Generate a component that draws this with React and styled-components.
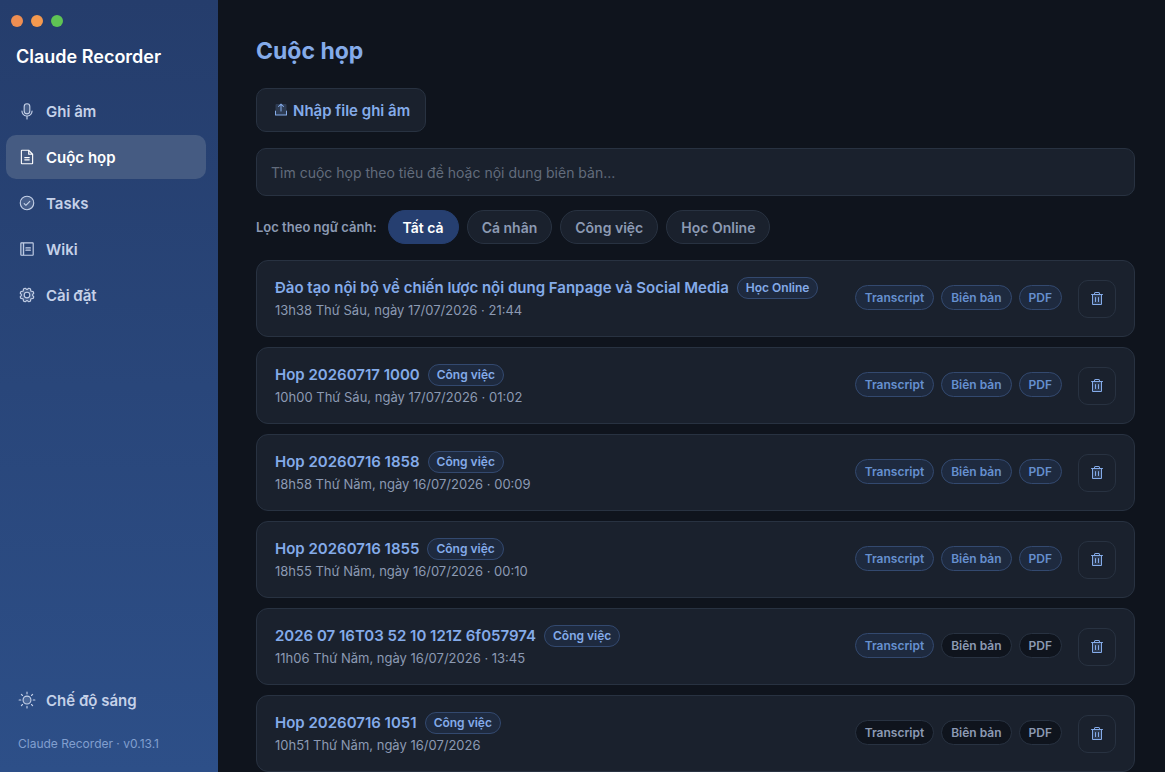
import React, { useState } from "react";
import styled, { createGlobalStyle } from "styled-components";
import {
  PiMicrophoneDuotone,
  PiFileTextDuotone,
  PiCheckCircleDuotone,
  PiNotebookDuotone,
  PiGearDuotone,
  PiSunDuotone,
  PiUploadSimpleDuotone,
  PiTrashDuotone,
} from "react-icons/pi";

const color = {
  page: "#0f141d",
  surface: "#1a212d",
  line: "#283241",
  primary: "#84abe9",
  link: "#6690cf",
  muted: "#8c9ab3",
  hint: "#626c7c",
};

const GlobalStyle = createGlobalStyle`
  * {
    box-sizing: border-box;
  }

  body {
    margin: 0;
    background: ${color.page};
    font-family: Inter, "Noto Sans", sans-serif;
    -webkit-font-smoothing: antialiased;
  }

  button,
  input {
    font-family: inherit;
  }
`;

const Layout = styled.div`
  display: flex;
  height: 100vh;
  overflow: hidden;
`;

const Sidebar = styled.aside`
  flex: none;
  width: 218px;
  display: flex;
  flex-direction: column;
  padding: 15px 12px 20px 6px;
  background: linear-gradient(180deg, #253d6c 0%, #2d4f88 100%);
`;

const WindowDots = styled.div`
  display: flex;
  gap: 8px;
  padding-left: 5px;
`;

const Dot = styled.span`
  width: 12px;
  height: 12px;
  border-radius: 50%;
  background: ${props => props.$tone};
`;

const Brand = styled.div`
  padding: 18px 10px 20px;
  font-size: 18px;
  line-height: 24px;
  font-weight: 600;
  color: #fff;
`;

const Nav = styled.nav`
  display: flex;
  flex-direction: column;
  gap: 2px;
  flex: 1;
`;

const NavLink = styled.a`
  display: flex;
  align-items: center;
  gap: 10px;
  height: 44px;
  padding: 0 12px;
  border-radius: 10px;
  font-size: 15px;
  font-weight: 600;
  text-decoration: none;
  color: ${props => (props.$active ? "#fff" : "#c5d1e8")};
  background: ${props => (props.$active ? "#455b82" : "transparent")};
`;

const ThemeButton = styled.button`
  display: flex;
  align-items: center;
  gap: 10px;
  height: 44px;
  padding: 0 12px;
  border: 0;
  background: none;
  font-size: 15px;
  font-weight: 600;
  color: #c5d1e8;
  cursor: pointer;
`;

const Version = styled.div`
  padding: 14px 12px 0;
  font-size: 12px;
  line-height: 16px;
  color: #819fcf;
`;

const Main = styled.main`
  flex: 1;
  min-width: 0;
  overflow: hidden;
  padding: 36px 30px 36px 38px;
`;

const Title = styled.h1`
  margin: 0 0 22px;
  font-size: 23px;
  line-height: 30px;
  font-weight: 700;
  color: ${color.primary};
`;

const ImportButton = styled.button`
  display: flex;
  align-items: center;
  gap: 4px;
  height: 44px;
  padding: 0 15px 0 16px;
  border: 1px solid ${color.line};
  border-radius: 10px;
  background: ${color.surface};
  font-size: 15px;
  font-weight: 600;
  color: ${color.primary};
  cursor: pointer;
`;

const Search = styled.input`
  display: block;
  width: 100%;
  height: 48px;
  margin: 16px 0 14px;
  padding: 0 14px;
  border: 1px solid ${color.line};
  border-radius: 10px;
  background: ${color.surface};
  font-size: 14px;
  color: ${color.primary};

  &::placeholder {
    color: ${color.hint};
  }
`;

const Filters = styled.div`
  display: flex;
  align-items: center;
  gap: 8px;
  margin-bottom: 16px;
`;

const FilterLabel = styled.span`
  margin-right: 3px;
  font-size: 13px;
  font-weight: 600;
  color: ${color.muted};
`;

const FilterButton = styled.button`
  height: 34px;
  padding: 0 14px;
  border: 1px solid ${props => (props.$active ? "#263f70" : color.line)};
  border-radius: 17px;
  background: ${props => (props.$active ? "#263f70" : color.surface)};
  font-size: 14px;
  font-weight: 600;
  color: ${props => (props.$active ? "#fff" : color.muted)};
  cursor: pointer;
`;

const List = styled.ul`
  display: flex;
  flex-direction: column;
  gap: 10px;
  margin: 0;
  padding: 0;
  list-style: none;
`;

const Card = styled.li`
  display: flex;
  align-items: center;
  gap: 16px;
  height: 77px;
  padding: 0 18px;
  border: 1px solid ${color.line};
  border-radius: 12px;
  background: ${color.surface};
`;

const Info = styled.div`
  flex: 1;
  min-width: 0;
  padding-bottom: 2px;
`;

const Heading = styled.div`
  display: flex;
  align-items: center;
  gap: 8px;
`;

const Name = styled.span`
  font-size: 15px;
  line-height: 24px;
  font-weight: 600;
  color: ${color.primary};
`;

const Tag = styled.span`
  height: 22px;
  padding: 0 8px;
  border: 1px solid #33496f;
  border-radius: 11px;
  background: #1e2a3f;
  font-size: 12px;
  line-height: 20px;
  font-weight: 600;
  color: ${color.primary};
`;

const Meta = styled.div`
  font-size: 13px;
  line-height: 20px;
  color: ${color.muted};
`;

const Actions = styled.div`
  display: flex;
  gap: 7px;
  padding-bottom: 2px;
`;

const ActionButton = styled.button`
  height: 25px;
  padding: 0 9px;
  border: 1px solid ${props => (props.$ready ? "#33496f" : color.line)};
  border-radius: 13px;
  background: ${props => (props.$ready ? "#1e2a3f" : color.page)};
  font-size: 12px;
  font-weight: 600;
  color: ${props => (props.$ready ? color.link : color.muted)};
  cursor: pointer;
`;

const DeleteButton = styled.button`
  display: flex;
  align-items: center;
  justify-content: center;
  width: 38px;
  height: 38px;
  padding: 0;
  border: 1px solid ${color.line};
  border-radius: 10px;
  background: transparent;
  color: ${color.primary};
  cursor: pointer;
`;

const navItems = [
  { label: "Ghi âm", Icon: PiMicrophoneDuotone },
  { label: "Cuộc họp", Icon: PiFileTextDuotone },
  { label: "Tasks", Icon: PiCheckCircleDuotone },
  { label: "Wiki", Icon: PiNotebookDuotone },
  { label: "Cài đặt", Icon: PiGearDuotone },
];

const filters = ["Tất cả", "Cá nhân", "Công việc", "Học Online"];
const actions = ["Transcript", "Biên bản", "PDF"];

// ready = how many of the actions above are available
const meetings = [
  {
    name: "Đào tạo nội bộ về chiến lược nội dung Fanpage và Social Media",
    tag: "Học Online",
    meta: "13h38 Thứ Sáu, ngày 17/07/2026 · 21:44",
    ready: 3,
  },
  {
    name: "Hop 20260717 1000",
    tag: "Công việc",
    meta: "10h00 Thứ Sáu, ngày 17/07/2026 · 01:02",
    ready: 3,
  },
  {
    name: "Hop 20260716 1858",
    tag: "Công việc",
    meta: "18h58 Thứ Năm, ngày 16/07/2026 · 00:09",
    ready: 3,
  },
  {
    name: "Hop 20260716 1855",
    tag: "Công việc",
    meta: "18h55 Thứ Năm, ngày 16/07/2026 · 00:10",
    ready: 3,
  },
  {
    name: "2026 07 16T03 52 10 121Z 6f057974",
    tag: "Công việc",
    meta: "11h06 Thứ Năm, ngày 16/07/2026 · 13:45",
    ready: 1,
  },
  {
    name: "Hop 20260716 1051",
    tag: "Công việc",
    meta: "10h51 Thứ Năm, ngày 16/07/2026",
    ready: 0,
  },
];

const Meeting = ({ name, tag, meta, ready }) => (
  <Card>
    <Info>
      <Heading>
        <Name>{name}</Name>
        <Tag>{tag}</Tag>
      </Heading>
      <Meta>{meta}</Meta>
    </Info>
    <Actions>
      {actions.map((action, i) => (
        <ActionButton key={action} $ready={i < ready}>
          {action}
        </ActionButton>
      ))}
    </Actions>
    <DeleteButton aria-label="Xóa">
      <PiTrashDuotone size={16} />
    </DeleteButton>
  </Card>
);

const App = () => {
  const [page, setPage] = useState("Cuộc họp");
  const [filter, setFilter] = useState("Tất cả");

  const shown = meetings.filter(m => filter === "Tất cả" || m.tag === filter);

  return (
    <Layout>
      <GlobalStyle />
      <Sidebar>
        <WindowDots>
          <Dot $tone="#ee8e52" />
          <Dot $tone="#f4994f" />
          <Dot $tone="#5fc454" />
        </WindowDots>
        <Brand>Claude Recorder</Brand>
        <Nav>
          {navItems.map(({ label, Icon }) => (
            <NavLink
              key={label}
              href="#"
              $active={label === page}
              onClick={() => setPage(label)}
            >
              <Icon size={18} />
              {label}
            </NavLink>
          ))}
        </Nav>
        <ThemeButton>
          <PiSunDuotone size={18} />
          Chế độ sáng
        </ThemeButton>
        <Version>Claude Recorder · v0.13.1</Version>
      </Sidebar>
      <Main>
        <Title>Cuộc họp</Title>
        <ImportButton>
          <PiUploadSimpleDuotone size={16} />
          Nhập file ghi âm
        </ImportButton>
        <Search
          type="search"
          aria-label="Tìm cuộc họp"
          placeholder="Tìm cuộc họp theo tiêu đề hoặc nội dung biên bản..."
        />
        <Filters>
          <FilterLabel>Lọc theo ngữ cảnh:</FilterLabel>
          {filters.map(item => (
            <FilterButton
              key={item}
              $active={item === filter}
              onClick={() => setFilter(item)}
            >
              {item}
            </FilterButton>
          ))}
        </Filters>
        <List>
          {shown.map(meeting => (
            <Meeting key={meeting.meta} {...meeting} />
          ))}
        </List>
      </Main>
    </Layout>
  );
};

export default App;
